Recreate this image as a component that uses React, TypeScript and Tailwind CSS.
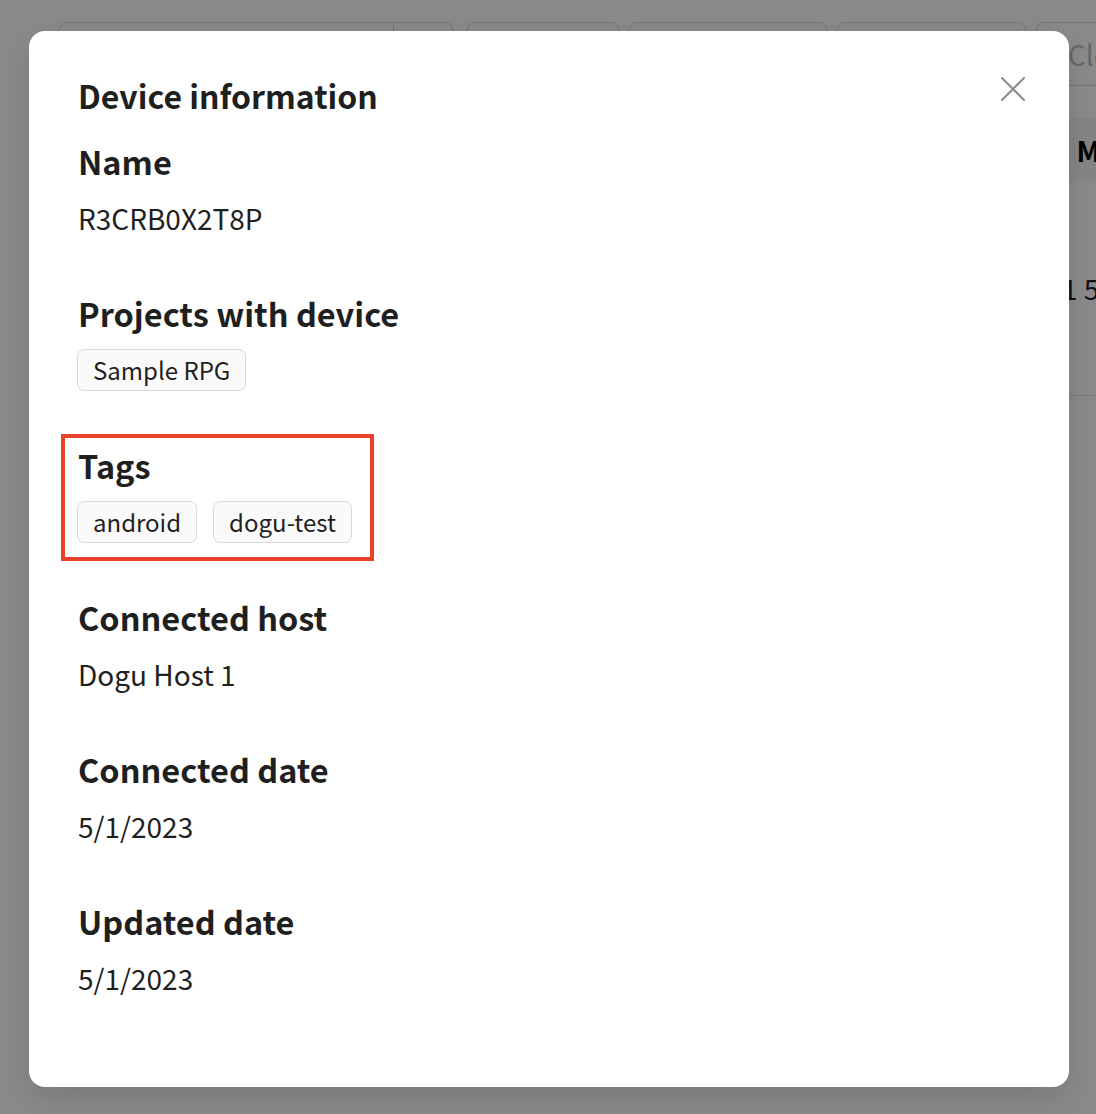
import React from 'react';

const font = "font-['Noto_Sans_CJK_JP','Noto_Sans',sans-serif]";

const Chip = ({ label }: { label: string }) => (
  <span className="inline-flex h-[42px] items-center rounded-[7px] border border-[#d9d9d9] bg-[#fafafa] px-[15px] text-[24px] leading-none text-[#1f1f1f]">
    {label}
  </span>
);

const Section = ({ title, children }: { title: string; children: React.ReactNode }) => (
  <div className="flex flex-col">
    <h3 className="h-[44px] pl-px text-[32.5px] font-semibold leading-[44px] text-[#1f1f1f]">{title}</h3>
    <div className="mt-[14px] flex h-[42px] items-center gap-4 text-[28px] text-[#1f1f1f]">{children}</div>
  </div>
);

const BackgroundPage = () => (
  <div className="h-[1114px] w-full bg-white">
    {/* toolbar */}
    <div className="flex items-start pl-[59px] pt-[22px]">
      <div className="flex h-[64px] shrink-0">
        <div className="w-[335px] shrink-0 rounded-l-[8px] border border-[#d9d9d9]" />
        <div className="w-[59px] shrink-0 rounded-r-[8px] border border-l-0 border-[#d9d9d9]" />
      </div>
      <div className="ml-[14px] h-[64px] w-[152px] shrink-0 rounded-[8px] border border-[#d9d9d9]" />
      <div className="ml-[10px] h-[64px] w-[198px] shrink-0 rounded-[8px] border border-[#d9d9d9]" />
      <div className="ml-[10px] h-[64px] w-[189px] shrink-0 rounded-[8px] border border-[#d9d9d9]" />
      <div className="ml-[10px] flex h-[64px] w-[160px] shrink-0 items-center rounded-[8px] border border-[#d9d9d9] pl-[31px] text-[28px] text-[#bfbfbf]">
        Clear
      </div>
    </div>
    {/* table */}
    <div className="mt-[32px] ml-[40px]">
      <div className="flex h-[63px] items-center bg-[#f5f5f5] text-[28px] font-semibold text-black">
        <div className="w-[1021px] shrink-0" />
        <div className="shrink-0 whitespace-nowrap">: Model</div>
      </div>
      <div className="flex h-[215px] items-center border-b border-[#e5e5e5] text-[28px] text-[#1f1f1f]">
        <div className="w-[1022px] shrink-0" />
        <div className="shrink-0 whitespace-nowrap">1 5G</div>
      </div>
    </div>
  </div>
);

export default function App() {
  return (
    <div className={`relative h-[1114px] w-[1096px] overflow-hidden ${font}`}>
      <BackgroundPage />
      <div className="absolute inset-0 bg-black/[0.46]" />
      <div className="absolute left-[29px] top-[31px] h-[1056px] w-[1040px] rounded-[16px] bg-white pl-[48px] pr-[49px] pt-[42px] shadow-[0_12px_32px_rgba(0,0,0,0.12)]">
        <button className="absolute right-[38px] top-[40px] flex h-[36px] w-[36px] items-center justify-center text-[#8c8c8c]">
          <svg width="24" height="24" viewBox="0 0 24 24" fill="none" stroke="currentColor" strokeWidth="2" strokeLinecap="round">
            <path d="M1 1L23 23M23 1L1 23" />
          </svg>
        </button>
        <h2 className="h-[44px] pl-px text-[32px] font-bold leading-[44px] text-[#1f1f1f]">Device information</h2>
        <div className="mt-[22px] flex flex-col gap-[52px]">
          <Section title="Name">
            <span className="pl-px">R3CRB0X2T8P</span>
          </Section>
          <Section title="Projects with device">
            <Chip label="Sample RPG" />
          </Section>
          <div className="relative">
            <div className="absolute -left-[16px] -top-[9px] h-[127px] w-[313px] border-4 border-[#e8412c]" />
            <Section title="Tags">
              <Chip label="android" />
              <Chip label="dogu-test" />
            </Section>
          </div>
          <Section title="Connected host">
            <span className="pl-px">Dogu Host 1</span>
          </Section>
          <Section title="Connected date">
            <span className="pl-px">5/1/2023</span>
          </Section>
          <Section title="Updated date">
            <span className="pl-px">5/1/2023</span>
          </Section>
        </div>
      </div>
    </div>
  );
}
